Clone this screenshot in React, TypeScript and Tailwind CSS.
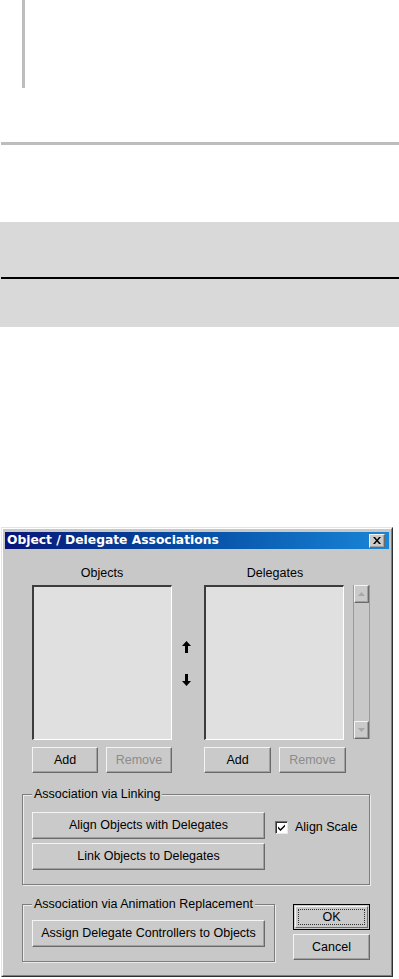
import React from "react";

const raised =
  "border-t border-l border-t-[#f4f4f4] border-l-[#f4f4f4] border-b border-r border-b-[#6a6a6a] border-r-[#6a6a6a] shadow-[inset_-1px_-1px_0_#a0a0a0]";

const Btn = ({
  label,
  w,
  h = "h-[27px]",
  disabled = false,
}: {
  label: string;
  w: string;
  h?: string;
  disabled?: boolean;
}) => (
  <div
    className={`${w} ${h} ${raised} bg-[#cacaca] flex items-center justify-center text-[12.5px] ${
      disabled ? "text-[#8c8c8c]" : "text-black"
    }`}
  >
    {label}
  </div>
);

const ListBox = () => (
  <div className="w-[140px] h-[155px] bg-[#e0e0e0] border-t-2 border-l-2 border-t-[#3c3c3c] border-l-[#3c3c3c] border-b border-r border-b-white border-r-white" />
);

const Group = ({
  legend,
  w,
  h,
  children,
}: {
  legend: string;
  w: string;
  h: string;
  children: React.ReactNode;
}) => (
  <div
    className={`relative ${w} ${h} border border-[#7c7c7c] shadow-[inset_1px_1px_0_#ececec,1px_1px_0_#ececec]`}
  >
    <span className="absolute left-[9px] -top-[8px] bg-[#c8c8c8] px-[2px] text-[12.5px] leading-[14px] text-black">
      {legend}
    </span>
    {children}
  </div>
);

const ArrowUp = () => (
  <svg width="9" height="12" viewBox="0 0 9 12">
    <path d="M4.5 0 L9 5 L6 5 L6 12 L3 12 L3 5 L0 5 Z" fill="#000" />
  </svg>
);

const ArrowDown = () => (
  <svg width="9" height="12" viewBox="0 0 9 12">
    <path d="M3 0 L6 0 L6 7 L9 7 L4.5 12 L0 7 L3 7 Z" fill="#000" />
  </svg>
);

const ScrollBar = () => (
  <div className="w-[17px] h-[154px] flex flex-col border-l border-r border-[#9a9a9a] bg-[#c8c8c8]">
    <div className={`h-[18px] ${raised} bg-[#cacaca] flex items-center justify-center`}>
      <svg width="7" height="4" viewBox="0 0 7 4">
        <path d="M3.5 0 L7 4 L0 4 Z" fill="#a8a8a8" />
      </svg>
    </div>
    <div className="flex-1" />
    <div className={`h-[18px] ${raised} bg-[#cacaca] flex items-center justify-center`}>
      <svg width="7" height="4" viewBox="0 0 7 4">
        <path d="M0 0 L7 0 L3.5 4 Z" fill="#a8a8a8" />
      </svg>
    </div>
  </div>
);

export default function App() {
  return (
    <div className="w-[399px] h-[979px] bg-white overflow-hidden font-['Liberation_Sans',Arial,sans-serif]">
      <div className="ml-[22px] w-[3px] h-[88px] bg-[#bdbdbd]" />
      <div className="mt-[54px] ml-[1px] h-[3px] bg-[#bdbdbd]" />
      <div className="mt-[77px] h-[105px] bg-[#d9d9d9] pt-[55px]">
        <div className="ml-[1px] h-[2px] bg-black" />
      </div>

      {/* dialog */}
      <div className="mt-[200px] ml-[1px] w-[392px] h-[450px] border-t border-l border-t-[#e4e4e4] border-l-[#e4e4e4] border-b border-r border-b-[#303030] border-r-[#303030]">
        <div className="h-full border-t border-l border-t-white border-l-white border-b border-r border-b-[#808080] border-r-[#808080] bg-[#c8c8c8] p-[2px] pt-[3px]">
          <div className="h-[17px] flex items-center justify-between bg-gradient-to-r from-[#0a1478] to-[#1a86d6] pl-[2px] pr-[4px]">
            <span className="text-white font-bold text-[12.3px] font-['DejaVu_Sans',Verdana,sans-serif]">
              Object / Delegate Associations
            </span>
            <div className={`w-[16px] h-[14px] ${raised} bg-[#cacaca] flex items-center justify-center`}>
              <svg width="8" height="7" viewBox="0 0 8 7">
                <path d="M0 0 L2 0 L4 2.5 L6 0 L8 0 L5 3.5 L8 7 L6 7 L4 4.5 L2 7 L0 7 L3 3.5 Z" fill="#000" />
              </svg>
            </div>
          </div>

          {/* lists */}
          <div className="flex mt-[17px] ml-[27px]">
            <div className="flex flex-col">
              <div className="h-[19px] text-center text-[12.5px] leading-[14px] text-black">Objects</div>
              <ListBox />
              <div className="flex gap-[8px] mt-[7px]">
                <Btn label="Add" w="w-[66px]" h="h-[26px]" />
                <Btn label="Remove" w="w-[66px]" h="h-[26px]" disabled />
              </div>
            </div>
            <div className="w-[32px] flex flex-col items-center pt-[75px] pr-[3px] gap-[21px]">
              <ArrowUp />
              <ArrowDown />
            </div>
            <div className="flex flex-col">
              <div className="h-[19px] text-center text-[12.5px] leading-[14px] text-black">Delegates</div>
              <ListBox />
              <div className="flex gap-[8px] mt-[7px]">
                <Btn label="Add" w="w-[67px]" h="h-[26px]" />
                <Btn label="Remove" w="w-[67px]" h="h-[26px]" disabled />
              </div>
            </div>
            <div className="ml-[7px] pt-[19px]">
              <ScrollBar />
            </div>
          </div>

          {/* linking group */}
          <div className="mt-[21px] ml-[17px]">
            <Group legend="Association via Linking" w="w-[348px]" h="h-[91px]">
              <div className="flex pt-[17px] pl-[9px]">
                <div className="flex flex-col gap-[4px]">
                  <Btn label="Align Objects with Delegates" w="w-[233px]" />
                  <Btn label="Link Objects to Delegates" w="w-[233px]" />
                </div>
                <div className="flex items-center h-[27px] ml-[10px] mt-[2px] gap-[7px]">
                  <div className="w-[13px] h-[13px] bg-white border-t border-l border-t-[#707070] border-l-[#707070] border-b border-r border-b-[#e8e8e8] border-r-[#e8e8e8] shadow-[inset_1px_1px_0_#303030] flex items-center justify-center">
                    <svg width="7" height="7" viewBox="0 0 7 7">
                      <path d="M0 2.5 L2.5 5 L7 0.5 L7 2.5 L2.5 7 L0 4.5 Z" fill="#000" />
                    </svg>
                  </div>
                  <span className="text-[12.5px] text-black">Align Scale</span>
                </div>
              </div>
            </Group>
          </div>

          {/* animation replacement group + OK/Cancel */}
          <div className="flex mt-[19px] ml-[17px]">
            <Group legend="Association via Animation Replacement" w="w-[253px]" h="h-[58px]">
              <div className="pt-[15px] pl-[9px]">
                <Btn label="Assign Delegate Controllers to Objects" w="w-[233px]" />
              </div>
            </Group>
            <div className="ml-[18px] flex flex-col gap-[4px]">
              <div className="w-[77px] h-[26px] border border-black bg-[#cacaca] p-[1px]">
                <div className="h-full border-t border-l border-t-[#f4f4f4] border-l-[#f4f4f4] border-b border-r border-b-[#6a6a6a] border-r-[#6a6a6a] p-[2px]">
                  <div className="h-full border border-dotted border-[#303030] flex items-center justify-center text-[12.5px] text-black">
                    OK
                  </div>
                </div>
              </div>
              <Btn label="Cancel" w="w-[77px]" h="h-[26px]" />
            </div>
          </div>
        </div>
      </div>
    </div>
  );
}
